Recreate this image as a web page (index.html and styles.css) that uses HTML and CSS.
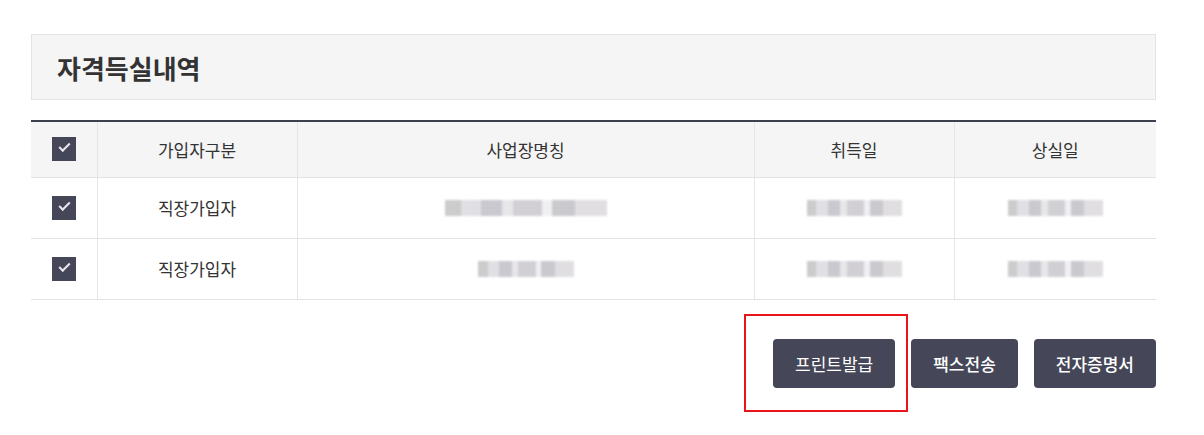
FILE: index.html
```html
<html>
  <head>
    <title>자격득실내역</title>
    <link rel="stylesheet" href="styles.css">
  </head>
  <body>
    <div class="wrap">
      <div class="titleBox">
        <h2 class="title">자격득실내역</h2>
      </div>

      <table class="list">
        <colgroup>
          <col style="width: 66px">
          <col style="width: 200px">
          <col style="width: 457px">
          <col style="width: 200px">
          <col style="width: 202px">
        </colgroup>
        <tr class="head">
          <th><span class="check"></span></th>
          <th>가입자구분</th>
          <th>사업장명칭</th>
          <th>취득일</th>
          <th>상실일</th>
        </tr>
        <tr>
          <td><span class="check"></span></td>
          <td>직장가입자</td>
          <td><span class="blur blurLong"></span></td>
          <td><span class="blur"></span></td>
          <td><span class="blur"></span></td>
        </tr>
        <tr>
          <td><span class="check"></span></td>
          <td>직장가입자</td>
          <td><span class="blur blurShort"></span></td>
          <td><span class="blur"></span></td>
          <td><span class="blur"></span></td>
        </tr>
      </table>

      <div class="buttons">
        <span class="marked">
          <button class="btn light">프린트발급</button>
          <span class="redBox"></span>
        </span>
        <button class="btn">팩스전송</button>
        <button class="btn">전자증명서</button>
      </div>
    </div>
  </body>
</html>
```
FILE: styles.css
```css
body
{
  margin: 0;
  font-family: "Noto Sans CJK KR", "Noto Sans", sans-serif;
  color: #333;
  background: #fff;
}

.wrap
{
  width: 1125px;
  padding: 34px 0 0 31px;
}

.titleBox
{
  height: 64px;
  border: 1px solid #e3e3e3;
  background: #f5f5f5;
  display: flex;
  align-items: center;
  padding-left: 25px;
}

.title
{
  margin: 0;
  font-size: 26px;
  font-weight: bold;
  color: #333;
}

.list
{
  width: 1125px;
  margin-top: 20px;
  border-collapse: collapse;
  table-layout: fixed;
  border-top: 2px solid #3e4050;
  border-bottom: 1px solid #c6c6c6;
  font-size: 17px;
  text-align: center;
}

.list th
{
  font-weight: normal;
  background: #f5f5f5;
  height: 56px;
}

.list td
{
  height: 61px;
}

.list th, .list td
{
  padding: 0;
  border-right: 1px solid #e6e6e6;
  border-bottom: 1px solid #e3e3e3;
}

.list th:last-child, .list td:last-child
{
  border-right: none;
}

.check
{
  display: inline-block;
  width: 24px;
  height: 24px;
  background: #454759;
  vertical-align: middle;
  position: relative;
}

.check::after
{
  content: "";
  position: absolute;
  left: 7px;
  top: 6px;
  width: 9px;
  height: 4px;
  border-left: 2px solid #e8e8ec;
  border-bottom: 2px solid #e8e8ec;
  transform: rotate(-45deg);
}

.blur
{
  display: inline-block;
  width: 95px;
  height: 16px;
  vertical-align: middle;
  background:
    linear-gradient(90deg, #bbb 0 10%, #d6d6dc 10% 22%, #b7b7bf 22% 35%, #e0dfe2 35% 42%, #c2c0c6 42% 60%, #ececef 60% 66%, #b9b8be 66% 80%, #d6d4d8 80% 100%);
  opacity: 0.75;
  filter: blur(1px);
}

.blurLong
{
  width: 162px;
}

.blurShort
{
  width: 96px;
}

.buttons
{
  display: flex;
  justify-content: flex-end;
  gap: 16px;
  margin-top: 39px;
}

.marked
{
  position: relative;
  display: flex;
}

.btn
{
  height: 49px;
  padding: 0 22px;
  border: none;
  border-radius: 4px;
  background: #454759;
  color: #fff;
  font-family: "Noto Sans CJK KR", "Noto Sans", sans-serif;
  font-size: 17px;
  font-weight: 500;
}

.light
{
  font-weight: normal;
}

.redBox
{
  position: absolute;
  left: -29px;
  top: -25px;
  right: -13px;
  bottom: -24px;
  border: 2px solid #e8141a;
}
```
